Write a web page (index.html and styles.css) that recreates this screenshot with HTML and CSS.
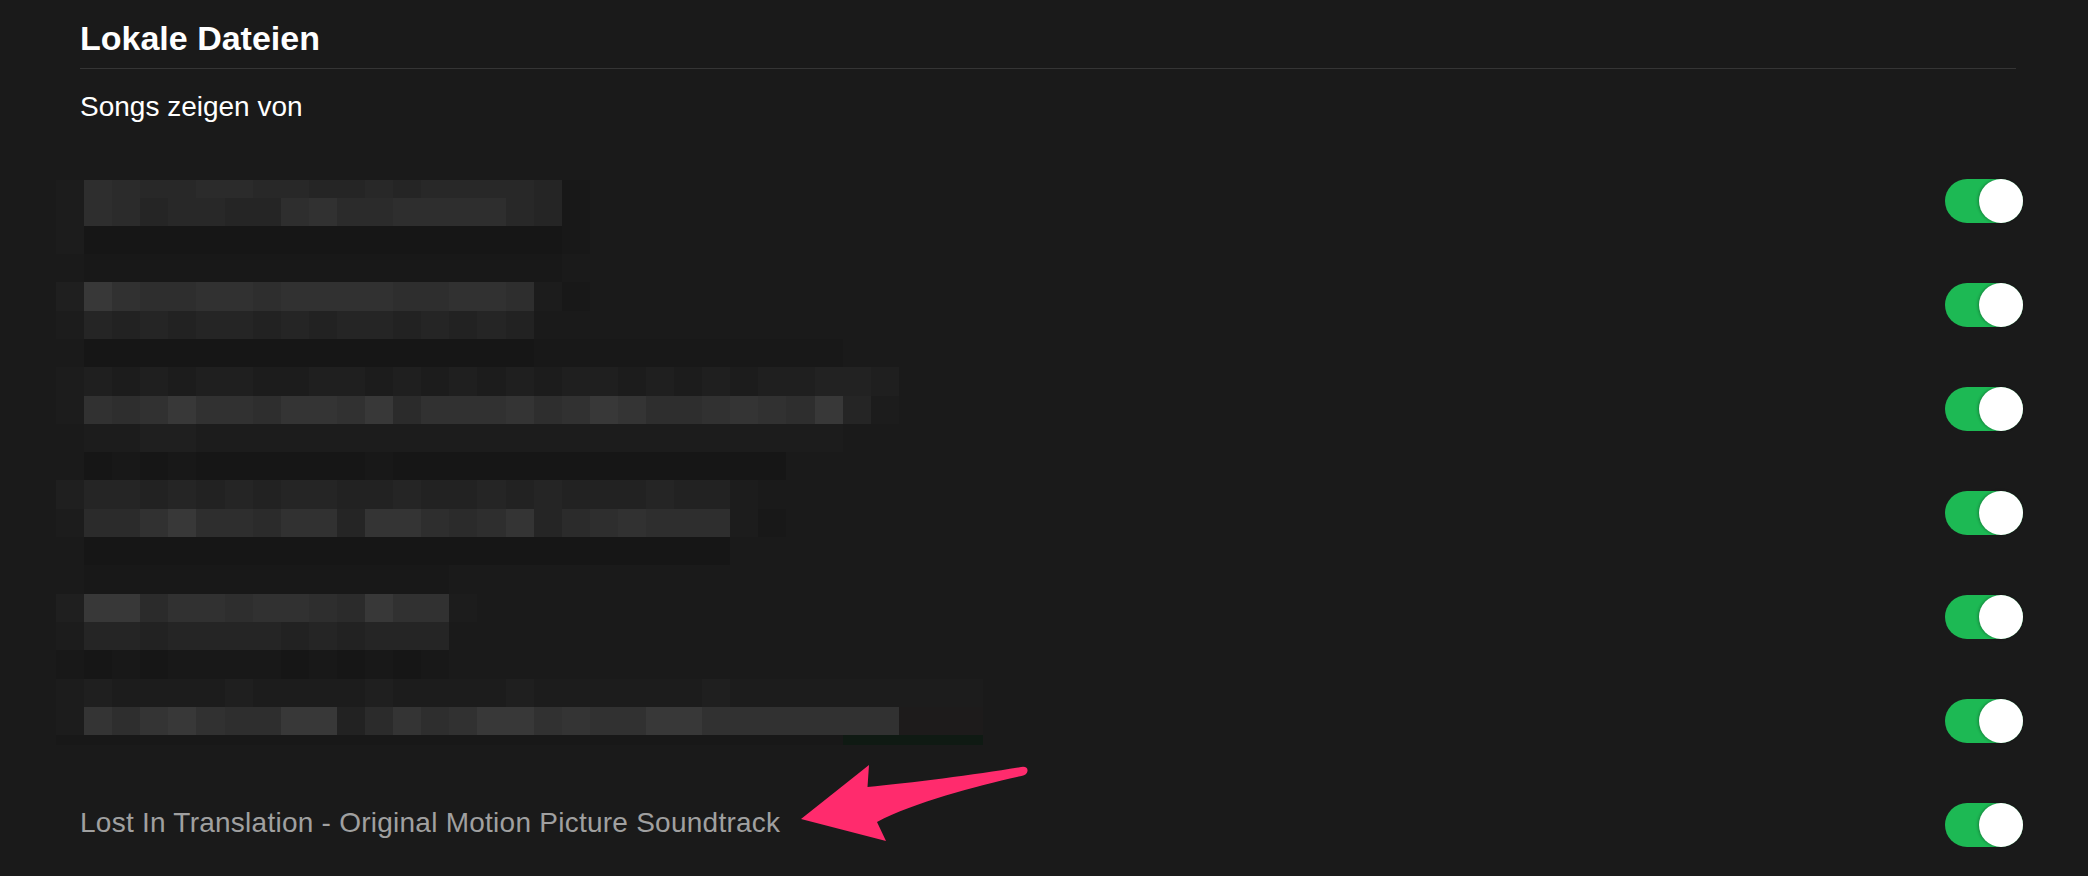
FILE: index.html
```html
<!DOCTYPE html>
<html lang="de">
<head>
<meta charset="utf-8">
<title>Lokale Dateien</title>
<link rel="stylesheet" href="styles.css">
</head>
<body>
<main class="page">
  <section class="settings">
    <h1 class="section-title">Lokale Dateien</h1>
    <h2 class="section-sub">Songs zeigen von</h2>
    <div class="source-list">
      <div class="source"><span class="source-name"></span><span class="toggle"><span class="knob"></span></span></div>
      <div class="source"><span class="source-name"></span><span class="toggle"><span class="knob"></span></span></div>
      <div class="source"><span class="source-name"></span><span class="toggle"><span class="knob"></span></span></div>
      <div class="source"><span class="source-name"></span><span class="toggle"><span class="knob"></span></span></div>
      <div class="source"><span class="source-name"></span><span class="toggle"><span class="knob"></span></span></div>
      <div class="source"><span class="source-name"></span><span class="toggle"><span class="knob"></span></span></div>
      <div class="source"><span class="source-name">Lost In Translation - Original Motion Picture Soundtrack</span><span class="toggle"><span class="knob"></span></span></div>
      <div class="mosaic" id="mosaic"></div>
    </div>
  </section>
  <svg class="arrow" viewBox="0 0 260 110" xmlns="http://www.w3.org/2000/svg">
    <path d="M21 69 L89 15 L87.5 37 C130 33 200 24 241 17 Q248 16 247.5 21 Q247 25 241.5 26 C200 35 135 52 97 72 L106 91 Z" fill="#ff2b6d"/>
  </svg>
</main>
<script src="script.js"></script>
</body>
</html>
```

FILE: styles.css
```css
html, body {
  margin: 0;
  padding: 0;
  background: #1a1a1a;
}

body {
  font-family: "Liberation Sans", Arial, sans-serif;
  color: #ffffff;
}

.page {
  position: relative;
  width: 2088px;
  height: 876px;
  overflow: hidden;
  padding-left: 80px;
  box-sizing: border-box;
}

.section-title {
  margin: 0;
  padding-top: 18px;
  padding-bottom: 10px;
  width: 1936px;
  font-size: 34px;
  line-height: 40px;
  font-weight: 700;
  color: #ffffff;
  border-bottom: 1px solid #353535;
}

.section-sub {
  margin: 22px 0 0;
  font-size: 28px;
  line-height: 32px;
  font-weight: 400;
  color: #ffffff;
}

.source-list {
  position: relative;
  margin-top: 26px;
  width: 1943px;
}

.source {
  display: flex;
  align-items: center;
  justify-content: space-between;
  height: 104px;
}

.source-name {
  font-size: 28px;
  letter-spacing: 0.25px;
  color: #a0a0a0;
  padding-bottom: 5px;
}

.toggle {
  display: flex;
  justify-content: flex-end;
  width: 78px;
  height: 44px;
  border-radius: 22px;
  background: #1db954;
}

.knob {
  width: 44px;
  height: 44px;
  border-radius: 50%;
  background: #ffffff;
  box-shadow: -1px 0 3px rgba(0, 0, 0, 0.3);
}

/* pixelated redaction lying over the first six source names */
.mosaic {
  position: absolute;
  left: -24px;
  top: 31px;
  display: grid;
  grid-template-columns: repeat(33, 28.1px);
  grid-template-rows: 17.5px repeat(19, 28.3px) 10px;
}

.px { display: block; }
.s0 { background: #161616; }
.s1 { background: #181818; }
.s2 { background: #1c1c1c; }
.s3 { background: #1f1f1f; }
.s4 { background: #222222; }
.s5 { background: #252525; }
.s6 { background: #282828; }
.s7 { background: #2b2b2b; }
.s8 { background: #2e2e2e; }
.s9 { background: #313131; }
.sa { background: #343434; }
.sb { background: #383838; }
.sg { background: #0f1a13; }
.sr { background: #1d1b1b; }

.arrow {
  position: absolute;
  left: 780px;
  top: 750px;
  width: 260px;
  height: 110px;
}
```

FILE: script.js
```js
(function () {
  var rows = [
    "2876677665565666651",
    "2875665589778888651",
    "2000000000000000001",
    ".11111111111111111",
    "3b98899899998899821",
    "25454554545545454",
    ".000000000000000011111111111",
    "232323322332323232332323233443",
    "2989b998aa9b7999a89ba889a98b52",
    ".223322222222222222222222222",
    ".0101000000100000000000000",
    "3554545455445445454445442",
    "2779b887995aa878a578988821",
    ".00000000000000000000000",
    ".1111111111111",
    "3bb79989987b992",
    "25545555454555",
    "10101111010101",
    "232222322223222232222223222222222",
    "2a8ab988bb47a89bb9a99bb9999999rrr",
    "1111111111111111111111111111ggggg"
  ];
  var m = document.getElementById("mosaic");
  rows.forEach(function (r) {
    while (r.length < 33) r += ".";
    for (var i = 0; i < 33; i++) {
      var ch = r.charAt(i);
      var d = document.createElement("i");
      d.className = ch === "." ? "px" : "px s" + ch;
      m.appendChild(d);
    }
  });
})();
```
